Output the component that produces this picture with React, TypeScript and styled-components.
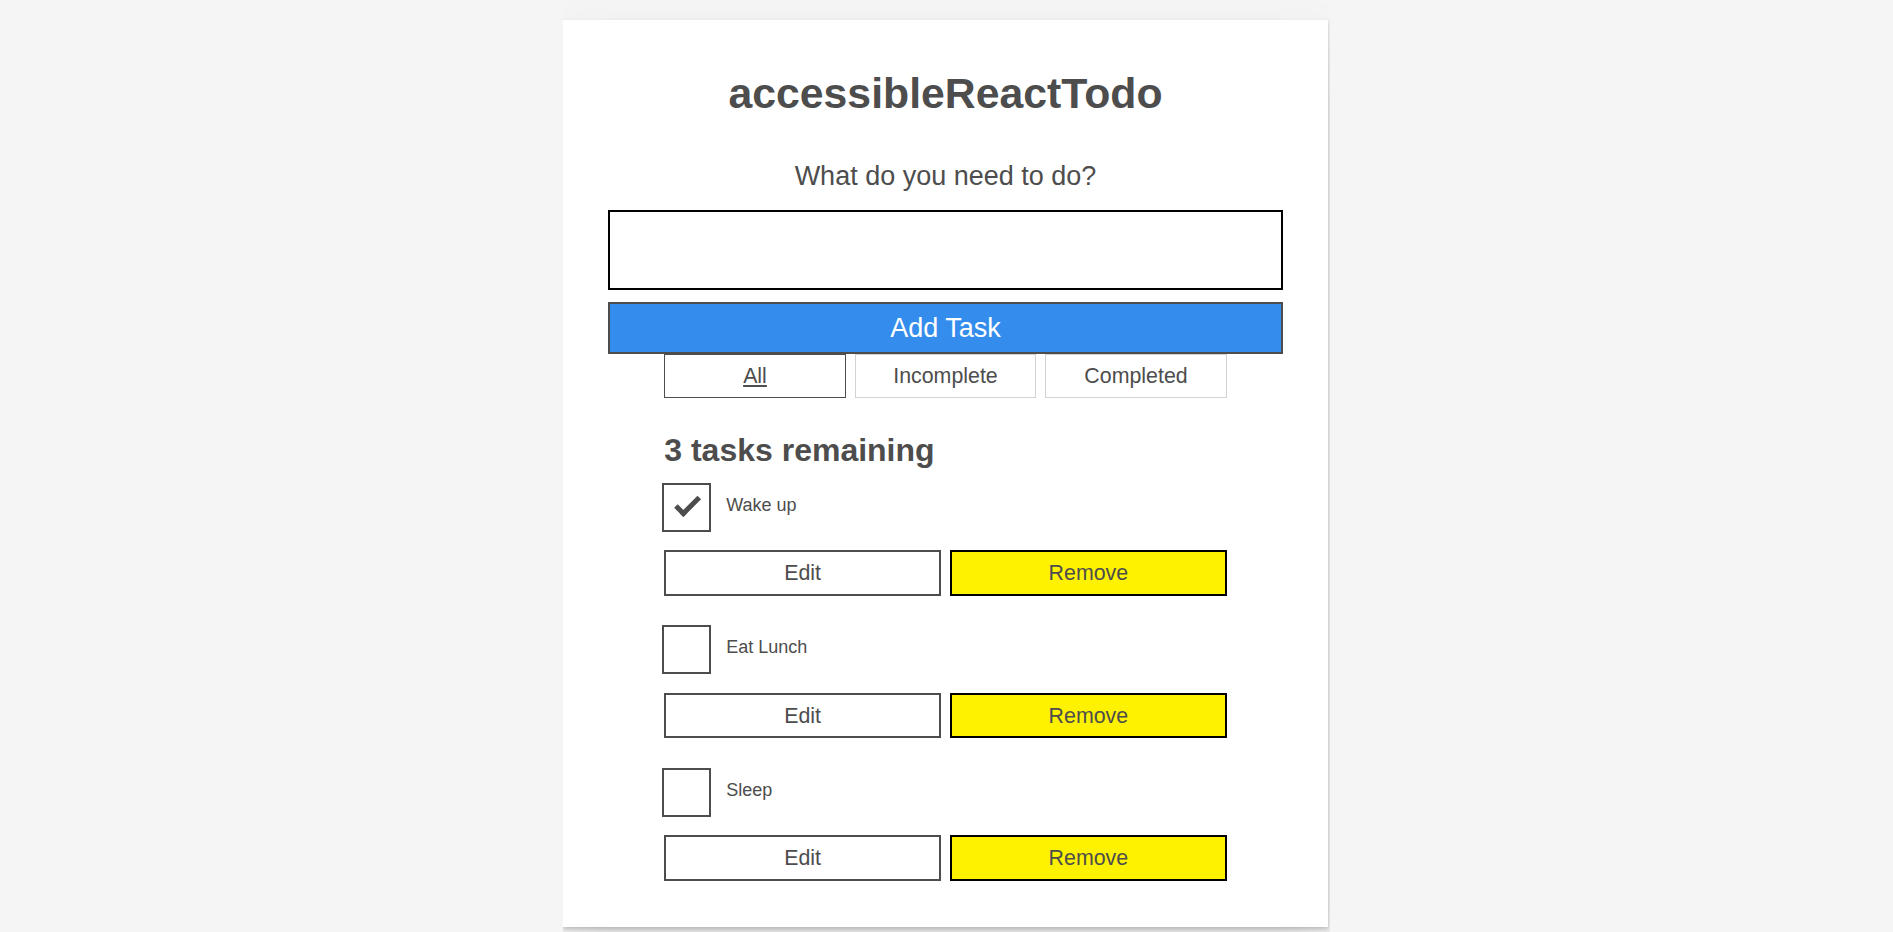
import React from "react";
import styled, { createGlobalStyle } from "styled-components";

const GlobalStyle = createGlobalStyle`
  *, *::before { box-sizing: border-box; }
  body {
    margin: 0 auto;
    max-width: 767px;
    padding-right: 2px;
    background-color: #f5f5f5;
    color: #4d4d4d;
    font: 21.375px/1.31579 "Liberation Sans", Arial, sans-serif;
  }
`;

const TodoApp = styled.div`
  background: #fff;
  margin: 20px 0 45px 0;
  padding: 45px 45px 46px;
  position: relative;
  box-shadow: 0 2px 4px 0 rgba(0, 0, 0, 0.2), 0 28px 56px 0 rgba(0, 0, 0, 0.1);
`;

const Title = styled.h1`
  margin: 0 0 11.25px;
  text-align: center;
  font-size: 42.75px;
  line-height: 56.25px;
  font-weight: 700;
`;

const LabelWrapper = styled.h2`
  margin: 32.5px 0 0;
  text-align: center;
  font-size: 27px;
`;

const BigLabel = styled.label`
  display: block;
  padding: 9px;
  margin-bottom: 10.5px;
  line-height: 1.01567;
  font-weight: 300;
`;

const BigInput = styled.input`
  display: block;
  width: 100%;
  height: 80px;
  padding: 22.5px;
  border: 2px solid #000;
  border-radius: 0;
  font: inherit;
  font-size: 27px;
  color: #4d4d4d;
  outline: none;
`;

const Button = styled.button<{ $tone?: "primary" | "danger" | "plain" }>`
  font-family: inherit;
  font-size: 21.375px;
  line-height: normal;
  padding: 9px 11.25px 7.875px;
  border: 2px solid ${(p) => (p.$tone === "danger" ? "#000" : "#4d4d4d")};
  border-radius: 0;
  cursor: pointer;
  text-transform: capitalize;
  color: ${(p) => (p.$tone === "primary" ? "#fff" : "#4d4d4d")};
  background-color: ${(p) =>
    p.$tone === "primary" ? "#348dec" : p.$tone === "danger" ? "#fff200" : "#fff"};
`;

const AddButton = styled(Button)`
  display: block;
  width: 100%;
  margin-top: 12px;
  font-size: 27px;
`;

const FilterGroup = styled.div`
  max-width: 562.5px;
  margin: 0 auto;
  display: flex;
  gap: 9px;
`;

const ToggleButton = styled(Button)<{ $pressed?: boolean }>`
  flex: 1 1 49%;
  border-width: 1px;
  border-color: ${(p) => (p.$pressed ? "#4d4d4d" : "#d3d3d3")};
  text-decoration: ${(p) => (p.$pressed ? "underline" : "none")};
  height: 44px;
`;

const ListHeading = styled.h2`
  max-width: 562.5px;
  margin: 31.5px auto 0;
  font-size: 32px;
  line-height: 42.1px;
  font-weight: 700;
`;

const TodoList = styled.ul`
  max-width: 562.5px;
  margin: 13.5px auto 0;
  padding: 0;
  list-style: none;
`;

const TodoItem = styled.li`
  display: flex;
  flex-direction: column;
  & + & { margin-top: 31.5px; }
`;

const CheckRow = styled.div`
  position: relative;
  min-height: 49.5px;
  padding-left: 45px;
  font-size: 18px;
  line-height: 1.25;
`;

const CheckInput = styled.input`
  position: absolute;
  top: -2px;
  left: -2px;
  width: 49px;
  height: 49px;
  margin: 0;
  opacity: 0;
  z-index: 1;
  cursor: pointer;

  &:checked + label::after { opacity: 1; }
`;

const CheckLabel = styled.label`
  display: inline-block;
  padding: 9px 17px 5.6px;
  cursor: pointer;

  &::before {
    content: "";
    position: absolute;
    top: -2px;
    left: -2px;
    width: 49px;
    height: 49px;
    border: 2px solid currentColor;
  }

  &::after {
    box-sizing: content-box;
    content: "";
    position: absolute;
    top: 12.6px;
    left: 10.3px;
    width: 20.25px;
    height: 7.8px;
    transform: rotate(-45deg);
    border: solid;
    border-width: 0 0 5.6px 5.6px;
    border-top-color: transparent;
    opacity: 0;
  }
`;

const BtnGroup = styled.div`
  display: flex;
  gap: 9px;
  margin-top: 15.75px;

  & > * { flex: 1 1 49%; }
`;

const tasks = [
  { id: "todo-0", name: "Wake up", done: true },
  { id: "todo-1", name: "Eat Lunch", done: false },
  { id: "todo-2", name: "Sleep", done: false },
];

export default function App() {
  return (
    <>
      <GlobalStyle />
      <TodoApp>
        <Title>accessibleReactTodo</Title>
        <form onSubmit={(e) => e.preventDefault()}>
          <LabelWrapper>
            <BigLabel htmlFor="new-todo-input">What do you need to do?</BigLabel>
          </LabelWrapper>
          <BigInput id="new-todo-input" type="text" autoComplete="off" />
          <AddButton type="submit" $tone="primary">Add Task</AddButton>
        </form>
        <FilterGroup>
          <ToggleButton type="button" $pressed>All</ToggleButton>
          <ToggleButton type="button">Incomplete</ToggleButton>
          <ToggleButton type="button">Completed</ToggleButton>
        </FilterGroup>
        <ListHeading>3 tasks remaining</ListHeading>
        <TodoList>
          {tasks.map((t) => (
            <TodoItem key={t.id}>
              <CheckRow>
                <CheckInput id={t.id} type="checkbox" defaultChecked={t.done} />
                <CheckLabel htmlFor={t.id}>{t.name}</CheckLabel>
              </CheckRow>
              <BtnGroup>
                <Button type="button">Edit</Button>
                <Button type="button" $tone="danger">Remove</Button>
              </BtnGroup>
            </TodoItem>
          ))}
        </TodoList>
      </TodoApp>
    </>
  );
}
